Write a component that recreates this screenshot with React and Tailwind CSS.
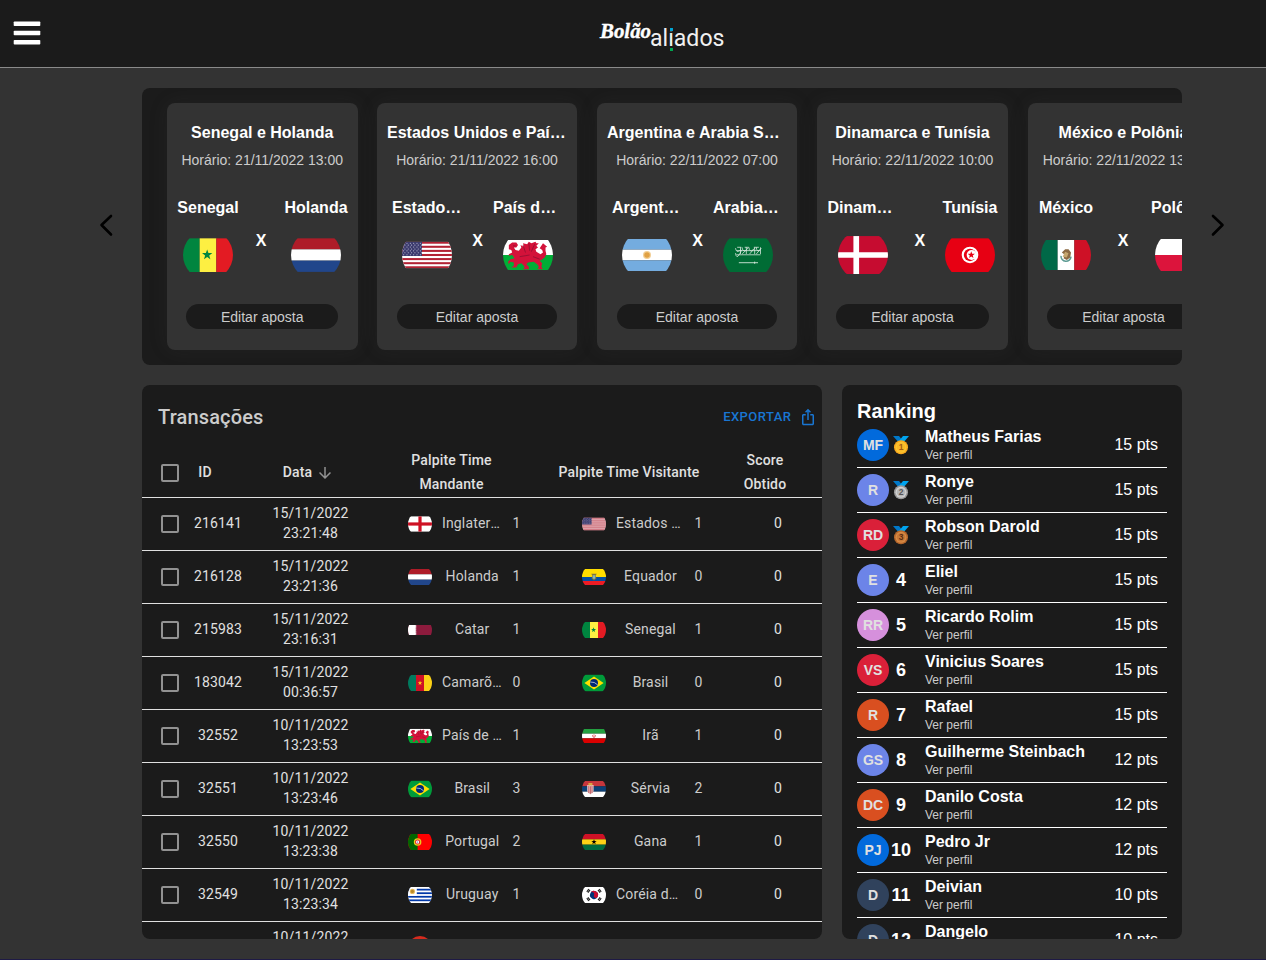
import React from "react";

const star = (cx, cy, r) => {
  const p = [];
  for (let i = 0; i < 10; i++) {
    const a = -Math.PI / 2 + (i * Math.PI) / 5;
    const q = i % 2 ? r * 0.4 : r;
    p.push(`${cx + q * Math.cos(a)},${cy + q * Math.sin(a)}`);
  }
  return p.join(" ");
};

const vert = (a, b, c) => (
  <>
    <rect width="20" height="60" fill={a} />
    <rect x="20" width="20" height="60" fill={b} />
    <rect x="40" width="20" height="60" fill={c} />
  </>
);
const horiz = (h, a, b, c) => (
  <>
    <rect width="60" height={h / 3} fill={a} />
    <rect y={h / 3} width="60" height={h / 3} fill={b} />
    <rect y={(2 * h) / 3} width="60" height={h / 3} fill={c} />
  </>
);

const FLAGS = {
  senegal: [40.5, <>{vert("#00853f", "#fdef42", "#e31b23")}<polygon points={star(29, 20, 6.5)} fill="#00853f" /></>],
  holanda: [40.5, horiz(40.5, "#ae1c28", "#ffffff", "#21468b")],
  eua: [
    32,
    <>
      <rect width="60" height="32" fill="#fff" />
      {[0, 1, 2, 3, 4, 5, 6].map((i) => (
        <rect key={i} y={i * 4.92} width="60" height="2.46" fill="#b22234" />
      ))}
      <rect width="24" height="17.2" fill="#3c3b6e" />
      {[0, 1, 2, 3, 4, 5, 6].map((r) =>
        [0, 1, 2, 3, 4, 5].map((c) => (
          <circle key={`${r}-${c}`} cx={2 + c * 4 + (r % 2 ? 1.5 : 0)} cy={1.8 + r * 2.3} r="0.65" fill="#c9c8dc" />
        ))
      )}
    </>,
  ],
  gales: [
    36,
    <>
      <rect width="60" height="18" fill="#fff" />
      <rect y="18" width="60" height="18" fill="#00ad36" />
      <path
        d="M7 6l4-3 5 0 2 3-2 3-3 0 2 3 4 1 3-4-1-3 4 2-1-4 5 1 2-3 3 2 5-2 1 2 3 0-3 3 2 2-3 2 1 3 5 3 3-2-1-3-3-2 4-6 5 4-2 1 0 4 1 4-2 4-4 3-2 1 3 3-1 4 2 3-7 0 2-2-1-3-5-4-7 1-2 2 3 3 0 3-7 0 2-2-1-2-3-3-4 1-2 4-6 0 3-2 0-4-4-1-2 3-1-3 3-3 5-1-3-4-4 1 0-2 4-2-1-3-3-1z"
        fill="#d3123a"
      />
      <path d="M24 6l3 9M31 4l1 9M38 5l-4 9M20 20l12-2M36 20l8 3M12 7h3" stroke="#8a1030" strokeWidth="0.9" fill="none" />
    </>,
  ],
  argentina: [38.4, <>{horiz(38.4, "#74acdf", "#fff", "#74acdf")}<circle cx="30" cy="19.2" r="4.8" fill="#f3cf95" /><circle cx="30" cy="19.2" r="3.3" fill="#e0a144" /></>],
  arabia: [
    40.5,
    <>
      <rect width="60" height="41" fill="#006c35" />
      <path
        d="M15 12q1 6 5 3t0 4-5-1m6-7v8m2-8q0 5 4 4m-4 4l7-7m-2-1v8m3-8q1 7 5 3m-4 5l6-7m0-1v8m2-8q0 6 5 3m-5 5l6-7m-1-1v8m-29-4h28M16 20h29M17 11h5m4 0h5m6 0h6"
        stroke="#dcebe2"
        strokeWidth="1.1"
        strokeOpacity="0.85"
        fill="none"
      />
      <path d="M19 29.5h23m-4-1.3v2.6" stroke="#e4f0e8" strokeWidth="1" fill="none" />
    </>,
  ],
  dinamarca: [
    45.4,
    <>
      <rect width="60" height="46" fill="#c60c30" />
      <rect x="18.5" width="6.8" height="46" fill="#fff" />
      <rect y="19.4" width="60" height="6.6" fill="#fff" />
    </>,
  ],
  tunisia: [
    40.5,
    <>
      <rect width="60" height="41" fill="#e70013" />
      <circle cx="30" cy="20.2" r="10" fill="#fff" />
      <circle cx="30" cy="20.2" r="7.4" fill="#e70013" />
      <circle cx="32" cy="20.2" r="6" fill="#fff" />
      <polygon points={star(31.5, 20.2, 4.6)} fill="#e70013" />
    </>,
  ],
  mexico: [
    36,
    <>
      {vert("#006847", "#fff", "#ce1126")}
      <path d="M24 19a6 6 0 0 0 12 1" stroke="#5d9b93" strokeWidth="1.8" fill="none" />
      <path d="M25 15l4-4 4 0 3 4-1 6-4 3-4-2 2-4z" fill="#8c6a43" />
      <path d="M26 20l3-6 4 2-2 5z" fill="#c6a76f" />
    </>,
  ],
  polonia: [38.4, <><rect width="60" height="19.2" fill="#fff" /><rect y="19.2" width="60" height="19.2" fill="#dc143c" /></>],
  inglaterra: [
    39,
    <>
      <rect width="60" height="39" fill="#fff" />
      <rect x="26" width="8" height="39" fill="#ce1124" />
      <rect y="15.5" width="60" height="8" fill="#ce1124" />
    </>,
  ],
  equador: [
    40,
    <>
      <rect width="60" height="20" fill="#ffdd00" />
      <rect y="20" width="60" height="10" fill="#034ea2" />
      <rect y="30" width="60" height="10" fill="#ed1c24" />
      <path d="M23 12h14l-3 4 2 8-6 5-6-5 2-8z" fill="#7d7740" />
      <ellipse cx="30" cy="20" rx="3.5" ry="5" fill="#8cb7b3" />
    </>,
  ],
  catar: [25, <><rect width="60" height="25" fill="#8d1b3d" /><path d="M0 0h18l4 1.4-4 1.4 4 1.4-4 1.4 4 1.4-4 1.4 4 1.4-4 1.4 4 1.4-4 1.4 4 1.4-4 1.4 4 1.4-4 1.4 4 1.4-4 1.4 4 1.3-4 1.3H0z" fill="#fff" /></>],
  camaroes: [40, <>{vert("#007a5e", "#ce1126", "#fcd116")}<polygon points={star(30, 20, 6)} fill="#fcd116" /></>],
  brasil: [
    42,
    <>
      <rect width="60" height="42" fill="#009b3a" />
      <polygon points="6,21 30,5 54,21 30,37" fill="#fedf00" />
      <circle cx="30" cy="21" r="10" fill="#002776" />
      <path d="M20.5 18.5q11-1 18.500 7" stroke="#dfe8f0" strokeWidth="1.8" fill="none" />
    </>,
  ],
  ira: [35, <>{horiz(35, "#239f40", "#fff", "#da0000")}<path d="M26 15q0 6 4 6t4-6M30 13v9" stroke="#e2585d" strokeWidth="1.8" fill="none" /></>],
  servia: [
    40,
    <>
      {horiz(40, "#c6363c", "#0c4076", "#fff")}
      <path d="M13 10h16v15q-2 7-8 9-6-2-8-9z" fill="#e8c9c9" />
      <path d="M17 12v18M21 13v19M25 12v18" stroke="#b5343c" strokeWidth="1.8" />
      <rect x="16" y="5" width="10" height="6" fill="#d9a441" />
    </>,
  ],
  portugal: [
    40,
    <>
      <rect width="60" height="40" fill="#ff0000" />
      <rect width="24" height="40" fill="#006600" />
      <circle cx="24" cy="20" r="9.500" fill="#e6d21e" />
      <circle cx="24" cy="20" r="6.300" fill="#e0202c" />
      <rect x="20.500" y="16" width="7" height="8" rx="3" fill="#fff" />
      <circle cx="24" cy="20" r="1.500" fill="#2b4da0" />
    </>,
  ],
  gana: [40, <>{horiz(40, "#ce1126", "#fcd116", "#006b3f")}<polygon points={star(30, 20, 7)} fill="#000" /></>],
  uruguai: [
    40,
    <>
      <rect width="60" height="40" fill="#fff" />
      {[0, 1, 2, 3].map((i) => (
        <rect key={i} y={4.4 + i * 8.9} width="60" height="4.400" fill="#0038a8" />
      ))}
      <rect width="22" height="22" fill="#fff" />
      <circle cx="11" cy="11" r="6.500" fill="#e6ba5c" />
      <circle cx="11" cy="11" r="4" fill="#b98a26" />
    </>,
  ],
  coreia: [
    40,
    <>
      <rect width="60" height="40" fill="#fff" />
      <g transform="rotate(25 30 20)">
        <circle cx="30" cy="20" r="10" fill="#003478" />
        <path d="M20 20a10 10 0 0 1 20 0a5 5 0 0 1-10 0a5 5 0 0 0-10 0z" fill="#c60c30" />
      </g>
      <path d="M12 12l5-7M15 14l5-7M43 5l5 7M40 7l5 7M12 28l5 7M15 26l5 7M43 35l5-7M40 33l5-7" stroke="#222" strokeWidth="2.800" />
    </>,
  ],
  suica: [
    60,
    <>
      <rect width="60" height="60" fill="#d52b1e" />
      <path d="M25 12h10v13h13v10H35v13H25V35H12V25h13z" fill="#fff" />
    </>,
  ],
};

function Flag({ name, className }) {
  const [h, art] = FLAGS[name];
  return (
    <svg viewBox="0 0 60 60" className={`shrink-0 overflow-hidden rounded-full ${className}`}>
      <svg y={(60 - h) / 2} width="60" height={h} viewBox={`0 0 60 ${h}`}>
        {art}
      </svg>
    </svg>
  );
}

const MATCHES = [
  { a: "Senegal", b: "Holanda", fa: "senegal", fb: "holanda", time: "21/11/2022 13:00", card: "w-[190.5px] mr-[-0.5px]", row: "pl-[6px]", x: "w-[38px] pr-[2px]" },
  { a: "Estados Unidos", b: "País de Gales", fa: "eua", fb: "gales", time: "21/11/2022 16:00", card: "w-[200px]", row: "pl-[15px]", x: "w-[31px]" },
  { a: "Argentina", b: "Arabia Saudita", fa: "argentina", fb: "arabia", time: "22/11/2022 07:00", card: "w-[200px]", row: "pl-[15px]", x: "w-[31px]" },
  { a: "Dinamarca", b: "Tunísia", fa: "dinamarca", fb: "tunisia", time: "22/11/2022 10:00", card: "w-[191px]", row: "pl-[10.5px]", x: "w-[37.5px] pl-[7px]" },
  { a: "México", b: "Polônia", fa: "mexico", fb: "polonia", time: "22/11/2022 13:00", card: "w-[191px]", row: "pl-[3px]", x: "w-[44px]" },
];

function Team({ name, flag }) {
  return (
    <div className="flex w-[70px] shrink-0 flex-col items-center">
      <div className="w-full truncate text-center text-base font-bold leading-6">{name}</div>
      <Flag name={flag} className="mt-[10px] size-[50px]" />
    </div>
  );
}

function MatchCard({ m }) {
  return (
    <article className={`h-[247px] shrink-0 rounded-[8px] bg-[#333333] pt-[18px] shadow-[0_0_20px_rgba(80,80,80,0.12)] ${m.card}`}>
      <h3 className="truncate px-[10px] text-center text-base font-bold leading-6">{m.a} e {m.b}</h3>
      <p className="mt-[5px] whitespace-nowrap text-center text-sm leading-5 text-[#cccccc]">Horário: {m.time}</p>
      <div className={`mt-[26px] flex ${m.row}`}>
        <Team name={m.a} flag={m.fa} />
        <div className={`shrink-0 pt-[33px] text-center text-base font-bold leading-6 ${m.x}`}>X</div>
        <Team name={m.b} flag={m.fb} />
      </div>
      <button className="mx-auto mt-[24px] block h-[25px] w-4/5 rounded-full bg-[#1b1b1b] pt-px text-sm leading-6 text-[#cccccc]">
        Editar aposta
      </button>
    </article>
  );
}

const ROWS = [
  ["216141", "15/11/2022", "23:21:48", "inglaterra", "Inglaterra", 1, "eua", "Estados Unidos", 1],
  ["216128", "15/11/2022", "23:21:36", "holanda", "Holanda", 1, "equador", "Equador", 0],
  ["215983", "15/11/2022", "23:16:31", "catar", "Catar", 1, "senegal", "Senegal", 1],
  ["183042", "15/11/2022", "00:36:57", "camaroes", "Camarões", 0, "brasil", "Brasil", 0],
  ["32552", "10/11/2022", "13:23:53", "gales", "País de Gales", 1, "ira", "Irã", 1],
  ["32551", "10/11/2022", "13:23:46", "brasil", "Brasil", 3, "servia", "Sérvia", 2],
  ["32550", "10/11/2022", "13:23:38", "portugal", "Portugal", 2, "gana", "Gana", 1],
  ["32549", "10/11/2022", "13:23:34", "uruguai", "Uruguay", 1, "coreia", "Coréia do Sul", 0],
  ["32548", "10/11/2022", "13:23:29", "suica", "Suíça", 1, "camaroes", "Camarões", 0],
];

function Checkbox() {
  return <span className="mx-auto block size-[18px] rounded-[2px] border-2 border-[#929292]" />;
}

function Transactions() {
  const cols = "grid grid-cols-[56px_40px_144px_138px_218px_54px] items-center border-b border-[#e0e0e0] text-center";
  return (
    <section className="h-[554px] w-[680px] shrink-0 overflow-hidden rounded-[8px] bg-[#1b1b1b] font-['Roboto',sans-serif] text-[#e0e0e0]">
      <div className="flex h-[63px] items-center justify-between pl-[16px] pr-[5px]">
        <h2 className="text-xl font-medium leading-8 tracking-[0.0075em] text-[#cccccc]">Transações</h2>
        <button className="flex items-center text-[13px] font-medium uppercase tracking-[0.46px] text-[#1976d2]">
          Exportar
          <svg viewBox="0 0 24 24" className="ml-[7.5px] mt-px size-[18px]" fill="currentColor">
            <path d="M16 5l-1.420 1.420-1.590-1.590V16h-1.980V4.830L9.420 6.420 8 5l4-4 4 4zm4 5v11c0 1.100-.9 2-2 2H6c-1.110 0-2-.9-2-2V10c0-1.110.890-2 2-2h3v2H6v11h12V10h-3V8h3c1.100 0 2 .890 2 2z" />
          </svg>
        </button>
      </div>
      <div className={`${cols} h-[50px] text-sm font-medium leading-6 tracking-[0.01071em]`}>
        <div className="pt-px"><Checkbox /></div>
        <div className="pb-px pr-[26px]">ID</div>
        <div className="flex items-center justify-center pb-px pr-[3px]">
          Data
          <svg viewBox="0 0 24 24" className="ml-[4px] mt-[2px] size-[18px]" fill="#929292">
            <path d="M20 12l-1.410-1.410L13 16.170V4h-2v12.170l-5.580-5.590L4 12l8 8 8-8z" />
          </svg>
        </div>
        <div className="-mt-[2px] pl-[21px] pr-[20px]">Palpite Time Mandante</div>
        <div className="pb-px">Palpite Time Visitante</div>
        <div className="-mt-[2px]">Score Obtido</div>
      </div>
      {ROWS.map(([id, d, t, fa, a, sa, fb, b, sb]) => (
        <div key={id} className={`${cols} h-[53px] text-sm leading-5 tracking-[0.01071em]`}>
          <Checkbox />
          <div className="flex justify-center pb-[2px]">{id}</div>
          <div className="px-[30px] pb-[2px] pl-[31px]">{d} {t}</div>
          <div className="flex items-center pl-[26px] text-[#cccccc]">
            <Flag name={fa} className="size-6" />
            <div className="ml-[10px] w-[60.5px] shrink-0 truncate pb-[2px]">{a}</div>
            <div className="w-[28px] shrink-0 pb-[2px]">{sa}</div>
          </div>
          <div className="flex items-center pl-[62px] text-[#cccccc]">
            <Flag name={fb} className="size-6" />
            <div className="ml-[10px] w-[69px] shrink-0 truncate pb-[2px]">{b}</div>
            <div className="w-[27px] shrink-0 pb-[2px]">{sb}</div>
          </div>
          <div className="pb-[2px] pl-[26px]">0</div>
        </div>
      ))}
    </section>
  );
}

const RANKING = [
  ["MF", "bg-[#026adc]", "Matheus Farias", 15],
  ["R", "bg-[#6c84e8]", "Ronye", 15],
  ["RD", "bg-[#da2039]", "Robson Darold", 15],
  ["E", "bg-[#6c84e8]", "Eliel", 15],
  ["RR", "bg-[#d690dc]", "Ricardo Rolim", 15],
  ["VS", "bg-[#da2039]", "Vinicius Soares", 15],
  ["R", "bg-[#d94f20]", "Rafael", 15],
  ["GS", "bg-[#6c84e8]", "Guilherme Steinbach", 12],
  ["DC", "bg-[#d94f20]", "Danilo Costa", 12],
  ["PJ", "bg-[#026adc]", "Pedro Jr", 12],
  ["D", "bg-[#30425c]", "Deivian", 10],
  ["D", "bg-[#30425c]", "Dangelo", 10],
];

const MEDALS = [
  ["#f9a91f", "#fcc62f", "#a35a12"],
  ["#9a9a9a", "#d3d3d3", "#555555"],
  ["#b5672c", "#d98b45", "#5c2d12"],
];

function Medal({ place }) {
  const [rim, face, ink] = MEDALS[place - 1];
  return (
    <svg viewBox="0 0 18 20" className="h-5 w-[18px]">
      <path d="M1 1h6l4 5-3 3z" fill="#0078c8" />
      <path d="M11 1h6l-6 7-4-2z" fill="#00a4ee" />
      <circle cx="9" cy="12.300" r="7" fill={rim} />
      <circle cx="9" cy="12.300" r="5.500" fill={face} />
      <circle cx="9" cy="12.300" r="4.200" fill={rim} fillOpacity="0.5" />
      <text x="9" y="15.300" textAnchor="middle" fontSize="8.500" fontWeight="700" fill={ink}>{place}</text>
    </svg>
  );
}

function Ranking() {
  return (
    <section className="h-[554px] w-[340px] shrink-0 overflow-hidden rounded-[8px] bg-[#1b1b1b] px-[15px] pt-[14px]">
      <h2 className="text-xl font-bold leading-6">Ranking</h2>
      {RANKING.map(([initials, color, name, pts], i) => (
        <div key={name} className="flex h-[45px] border-b border-white">
          <div className={`mt-[6px] flex size-8 shrink-0 items-center justify-center rounded-full text-sm font-bold text-[#e0e0e0] ${color}`}>
            {initials}
          </div>
          <div className="flex w-6 shrink-0 items-center justify-center whitespace-nowrap text-lg font-bold">
            {i < 3 ? <Medal place={i + 1} /> : i + 1}
          </div>
          <div className="ml-[12px] flex-1 pt-[4px]">
            <div className="whitespace-nowrap text-base font-bold leading-[19px]">{name}</div>
            <div className="mt-px text-xs leading-[17px] text-[#cccccc]">Ver perfil</div>
          </div>
          <div className="mr-[9px] self-center text-base">{pts} pts</div>
        </div>
      ))}
    </section>
  );
}

function Logo() {
  return (
    <svg viewBox="0 0 134 40" className="h-10 w-[134px]">
      <text x="3" y="22" fontFamily="Liberation Serif, serif" fontStyle="italic" fontWeight="700" fontSize="22" textLength="51" lengthAdjust="spacingAndGlyphs" fill="#fff" stroke="#fff" strokeWidth="0.4">Bolão</text>
      <text x="53" y="30" fontFamily="Roboto, sans-serif" fontWeight="400" fontSize="24.500" textLength="74.500" lengthAdjust="spacingAndGlyphs" fill="#f0f0f0">aliados</text>
      <rect x="71" y="10" width="5.500" height="5.500" fill="#1b1b1b" />
      <rect x="73" y="12" width="3" height="3" fill="#00a5d4" />
      <rect x="73" y="32" width="3" height="3" fill="#00a650" />
    </svg>
  );
}

function Arrow({ d }) {
  return (
    <svg viewBox="0 0 16 24" className="mb-[4px] h-6 w-4 shrink-0" fill="none" stroke="#000" strokeWidth="2.600" strokeLinecap="round" strokeLinejoin="round">
      <path d={d} />
    </svg>
  );
}

export default function App() {
  return (
    <div className="flex h-[960px] w-[1266px] flex-col overflow-hidden border-b border-[#1e1a45] bg-[#333333] font-['Liberation_Sans',Arial,sans-serif] text-white">
      <header className="flex h-[68px] shrink-0 items-center border-b border-[#8a8a8a] bg-[#1b1b1b] pl-[13px]">
        <svg viewBox="0 0 28 28" className="mb-[2px] size-7" fill="#fff">
          <rect x="0.700" y="2.400" width="26.600" height="4.700" rx="0.800" />
          <rect x="0.700" y="11.650" width="26.600" height="4.700" rx="0.800" />
          <rect x="0.700" y="20.900" width="26.600" height="4.700" rx="0.800" />
        </svg>
        <div className="ml-[556px] mt-[4px]"><Logo /></div>
      </header>
      <main className="mt-[20px] pl-[98px]">
        <div className="flex items-center">
          <Arrow d="M13 3L3.500 12L13 21.500" />
          <div className="ml-[28px] flex h-[277px] w-[1040px] shrink-0 gap-[20px] overflow-hidden rounded-[8px] bg-[#1b1b1b] pl-[25px] pt-[15px]">
            {MATCHES.map((m) => (
              <MatchCard key={m.a} m={m} />
            ))}
          </div>
          <div className="ml-[28px] flex"><Arrow d="M3 3L12.500 12L3 21.500" /></div>
        </div>
        <div className="mt-[20px] flex gap-[20px] pl-[44px]">
          <Transactions />
          <Ranking />
        </div>
      </main>
    </div>
  );
}
